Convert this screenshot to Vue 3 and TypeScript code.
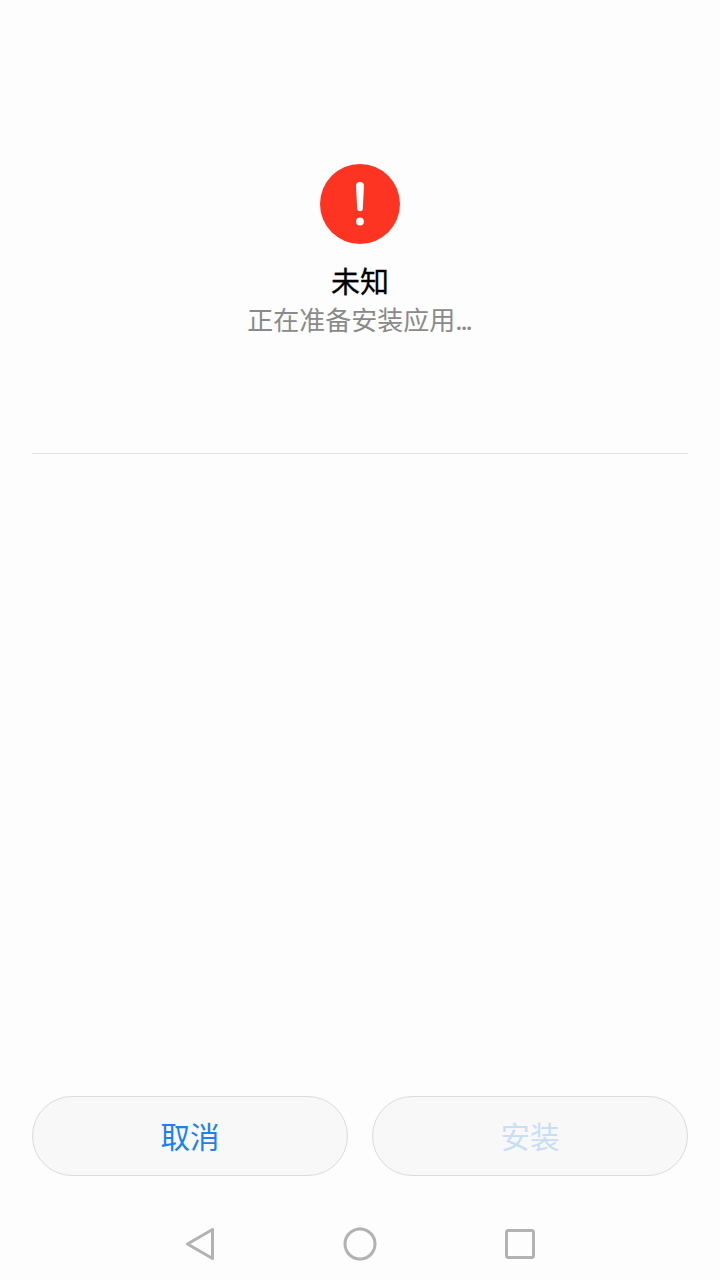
<script setup lang="ts">
const title = "未知";
const status = "正在准备安装应用";
</script>

<template>
  <div class="page">
    <header class="head">
      <svg class="alert" width="80" height="80" viewBox="0 0 80 80">
        <circle cx="40" cy="40" r="40" fill="#fe3422" />
        <!-- bar of the mark narrows towards the dot -->
        <path d="M36 22a4 4 0 0 1 8 0l-1.2 22.5a2.8 2.8 0 0 1-5.6 0z" fill="#fff" />
        <circle cx="40" cy="57.5" r="3.9" fill="#fff" />
      </svg>
      <h1 class="title">{{ title }}</h1>
      <p class="status">{{ status }}<span class="dots">...</span></p>
    </header>

    <div class="divider"></div>
    <div class="spacer"></div>

    <div class="actions">
      <button class="btn" type="button">取消</button>
      <button class="btn off" type="button" disabled>安装</button>
    </div>

    <nav class="nav">
      <svg class="nav-icon" width="30" height="34" viewBox="0 0 30 34">
        <path d="M2.5 17 27.5 2.5v29z" fill="none" stroke="#b2b2b2" stroke-width="3" stroke-linejoin="round" />
      </svg>
      <svg class="nav-icon" width="34" height="34" viewBox="0 0 34 34">
        <circle cx="17" cy="17" r="15" fill="none" stroke="#b2b2b2" stroke-width="3" />
      </svg>
      <svg class="nav-icon last" width="32" height="32" viewBox="0 0 32 32">
        <rect x="2.5" y="2.5" width="27" height="27" rx="2" fill="none" stroke="#b2b2b2" stroke-width="3" />
      </svg>
    </nav>
  </div>
</template>

<style>
html,
body {
  margin: 0;
  background: #fdfdfd;
}
</style>

<style scoped>
.page {
  height: 1280px;
  display: flex;
  flex-direction: column;
  background: #fdfdfd;
  font-family: "Noto Sans CJK SC", "Noto Sans", sans-serif;
}

.head {
  height: 453px;
  padding-top: 164px;
  box-sizing: border-box;
  display: flex;
  flex-direction: column;
  align-items: center;
  flex: none;
}

.alert {
  display: block;
  flex: none;
}

.title {
  margin: 16px 0 0;
  font-size: 29px;
  line-height: 40px;
  font-weight: 400;
  color: #000;
  -webkit-text-stroke: 0.3px #000;
}

.status {
  margin: 1px 0 0;
  padding-right: 2px;
  font-size: 26px;
  line-height: 36px;
  color: #8a8a8a;
}

.dots {
  letter-spacing: -2px;
}

.divider {
  height: 1px;
  margin: 0 32px;
  background: #e2e2e2;
  flex: none;
}

.spacer {
  flex: 1;
}

.actions {
  display: flex;
  gap: 24px;
  padding: 0 32px;
}

.btn {
  flex: 1;
  height: 80px;
  padding: 0 0 2px;
  border: 1px solid #dcdcdc;
  border-radius: 40px;
  background: #f8f8f8;
  font-family: inherit;
  font-size: 29.5px;
  color: #1a82e8;
}

.btn.off {
  color: #c6def6;
}

.nav {
  height: 104px;
  box-sizing: border-box;
  padding: 32px 0 0 1px;
  display: flex;
  align-items: center;
  justify-content: center;
  gap: 128px;
}

.nav-icon {
  display: block;
  flex: none;
}

.nav-icon.last {
  margin-left: -1px;
}
</style>
